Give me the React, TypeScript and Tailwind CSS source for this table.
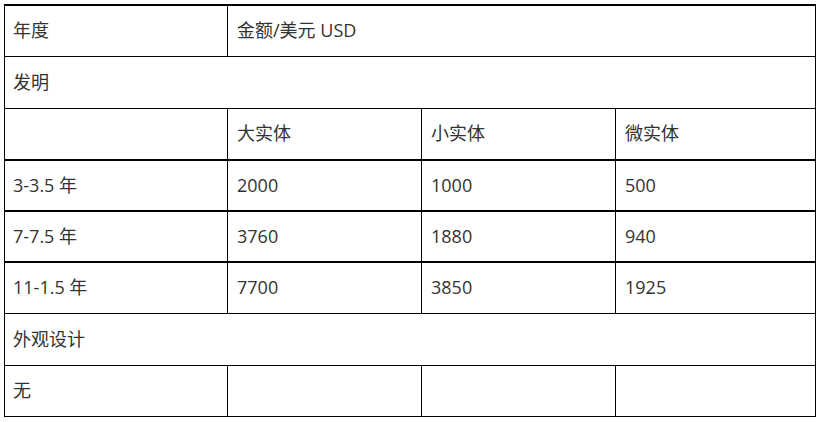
const rows = [
  { label: "3-3.5 年", values: ["2000", "1000", "500"] },
  { label: "7-7.5 年", values: ["3760", "1880", "940"] },
  { label: "11-1.5 年", values: ["7700", "3850", "1925"] },
];

const cell = "border border-black px-[8px] align-middle text-left font-normal";

export default function App() {
  return (
    <div
      className="min-h-screen bg-white pl-[4px] pt-[4px] text-[18px] text-[#333333]"
      style={{ fontFamily: '"Open Sans", "Noto Sans CJK SC", sans-serif' }}
    >
      <table className="w-[811px] table-fixed border-collapse">
        <colgroup>
          <col className="w-[223px]" />
          <col className="w-[194px]" />
          <col className="w-[194px]" />
          <col className="w-[200px]" />
        </colgroup>
        <tbody>
          <tr className="h-[51px]">
            <td className={`${cell} border-t-2`}>年度</td>
            <td className={`${cell} border-t-2 pl-[9px]`} colSpan={3}>
              金额/美元 USD
            </td>
          </tr>
          <tr className="h-[52px]">
            <td className={cell} colSpan={4}>
              发明
            </td>
          </tr>
          <tr className="h-[52px]">
            <td className={cell}></td>
            <td className={`${cell} pl-[9px]`}>大实体</td>
            <td className={`${cell} pl-[9px]`}>小实体</td>
            <td className={`${cell} pl-[9px]`}>微实体</td>
          </tr>
          {rows.map((r) => (
            <tr key={r.label} className="h-[51px]">
              <td className={`${cell} border-t-2`}>{r.label}</td>
              {r.values.map((v) => (
                <td key={v} className={`${cell} border-t-2 pl-[9px]`}>
                  {v}
                </td>
              ))}
            </tr>
          ))}
          <tr className="h-[52px]">
            <td className={cell} colSpan={4}>
              外观设计
            </td>
          </tr>
          <tr className="h-[51px]">
            <td className={cell}>无</td>
            <td className={cell}></td>
            <td className={cell}></td>
            <td className={cell}></td>
          </tr>
        </tbody>
      </table>
    </div>
  );
}
